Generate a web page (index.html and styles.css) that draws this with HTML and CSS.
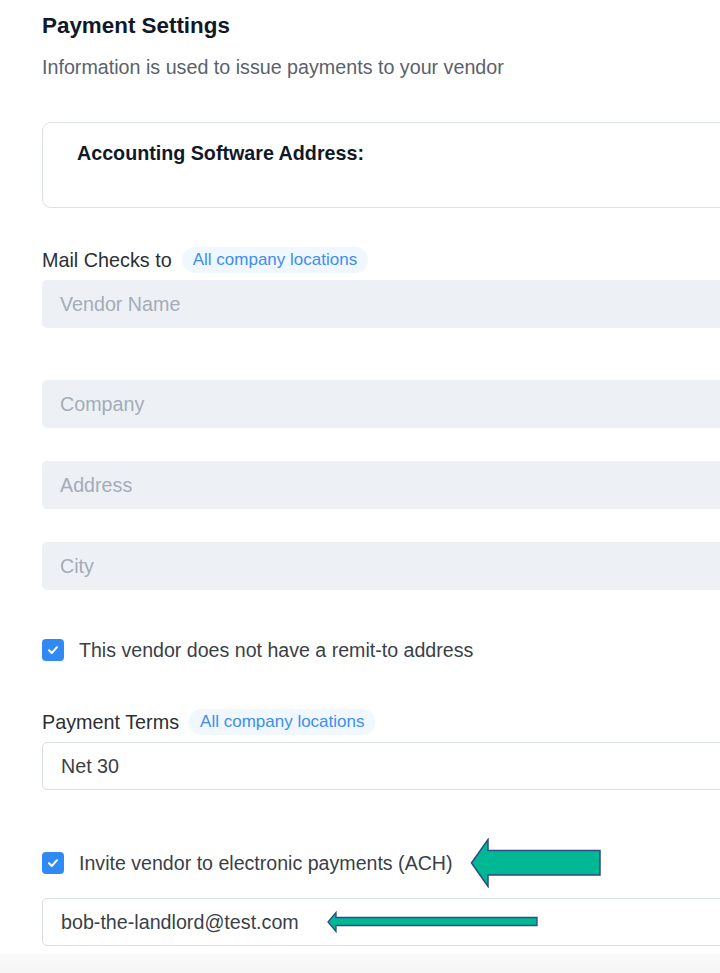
FILE: index.html
```html
<!DOCTYPE html>
<html lang="en">

<head>
    <meta charset="UTF-8">
    <meta name="viewport" content="width=device-width, initial-scale=1.0">
    <title>Payment Settings</title>
    <link rel="stylesheet" href="styles.css">
</head>

<body>
    <div class="page">
        <h2 class="title">Payment Settings</h2>
        <p class="subtitle">Information is used to issue payments to your vendor</p>

        <div class="card">
            <div class="card-title">Accounting Software Address:</div>
        </div>

        <div class="label-row mail-label">
            <span class="label">Mail Checks to</span>
            <span class="badge">All company locations</span>
        </div>
        <div class="input filled">Vendor Name</div>
        <div class="input filled gap-lg">Company</div>
        <div class="input filled gap-md">Address</div>
        <div class="input filled gap-md">City</div>

        <div class="check-row remit">
            <span class="checkbox">
                <svg width="12" height="10" viewBox="0 0 12 10"><path d="M2 5.2 L4.8 8 L10 2.2" fill="none" stroke="#fff" stroke-width="2" stroke-linecap="round" stroke-linejoin="round"/></svg>
            </span>
            <span class="check-text">This vendor does not have a remit-to address</span>
        </div>

        <div class="label-row terms-label">
            <span class="label">Payment Terms</span>
            <span class="badge">All company locations</span>
        </div>
        <div class="input plain">Net 30</div>

        <div class="check-row ach">
            <span class="checkbox">
                <svg width="12" height="10" viewBox="0 0 12 10"><path d="M2 5.2 L4.8 8 L10 2.2" fill="none" stroke="#fff" stroke-width="2" stroke-linecap="round" stroke-linejoin="round"/></svg>
            </span>
            <span class="check-text">Invite vendor to electronic payments (ACH)</span>
            <svg class="arrow-big" width="132" height="50" viewBox="0 0 132 50">
                <polygon points="1.5,25 18,1.5 18,12.5 130,12.5 130,37 18,37 18,48.5" fill="#00b894" stroke="#2d4a8a" stroke-width="1.5" stroke-linejoin="miter"/>
            </svg>
        </div>
        <div class="input plain email">
            <span>bob-the-landlord@test.com</span>
            <svg class="arrow-small" width="212" height="22" viewBox="0 0 212 22">
                <polygon points="1,11 9,1.5 9,6.5 210,6.5 210,14.5 9,14.5 9,20.5" fill="#00b894" stroke="#2d4a8a" stroke-width="1.3"/>
            </svg>
        </div>
    </div>
    <div class="footer-strip"></div>
</body>

</html>
```

FILE: styles.css
```css
*{
    margin: 0;
    padding: 0;
    box-sizing: border-box;
}
html, body{
    background-color: #fff;
    overflow: hidden;
}
body{
    font-family: "Liberation Sans", Arial, sans-serif;
    color: #333;
    width: 720px;
}
.page{
    padding: 13px 0 0 42px;
    width: 720px;
    overflow: hidden;
    display: flex;
    flex-direction: column;
    align-items: flex-start;
}
.title{
    font-size: 22.4px;
    font-weight: bold;
    color: #111827;
    line-height: 26px;
}
.subtitle{
    font-size: 19.7px;
    color: #5b616b;
    margin-top: 17px;
    line-height: 22px;
}
.card{
    margin-top: 44px;
    width: 700px;
    flex-shrink: 0;
    height: 86px;
    border: 1.5px solid #dde2ea;
    border-radius: 9px;
    padding: 18px 0 0 34px;
}
.card-title{
    font-size: 19.7px;
    font-weight: bold;
    color: #111827;
    line-height: 24px;
}
.label-row{
    display: flex;
    align-items: center;
    gap: 10px;
    height: 28px;
}
.mail-label{
    margin-top: 38px;
}
.terms-label{
    margin-top: 46px;
}
.label{
    font-size: 19.8px;
    color: #2b2f36;
}
.badge{
    background-color: #f0f7ff;
    color: #3d8ef0;
    font-size: 17px;
    border-radius: 14px;
    padding: 4px 11px;
    line-height: 18px;
}
.input{
    width: 700px;
    flex-shrink: 0;
    height: 48px;
    border-radius: 5px;
    font-size: 19.7px;
    padding-left: 18px;
    display: flex;
    align-items: center;
    margin-top: 6px;
}
.filled{
    background-color: #edf1f5;
    color: #a3acb8;
}
.gap-lg{
    margin-top: 52px;
}
.gap-md{
    margin-top: 33px;
}
.plain{
    background-color: #fff;
    border: 1.5px solid #d8dde6;
    color: #3a3f47;
}
.check-row{
    display: flex;
    align-items: center;
}
.remit{
    margin-top: 48px;
    height: 24px;
}
.ach{
    margin-top: 48px;
    height: 50px;
}
.checkbox{
    width: 22px;
    height: 22px;
    border-radius: 4px;
    background-color: #2f8bf3;
    display: flex;
    align-items: center;
    justify-content: center;
    margin-right: 15px;
}
.check-text{
    font-size: 19.6px;
    color: #3a3f47;
}
.arrow-big{
    margin-left: 17px;
}
.email{
    margin-top: 10px;
}
.arrow-small{
    margin-left: 28px;
}
.footer-strip{
    height: 20px;
    margin-top: 8px;
    background: linear-gradient(#fafafa, #f5f5f5);
}
```
